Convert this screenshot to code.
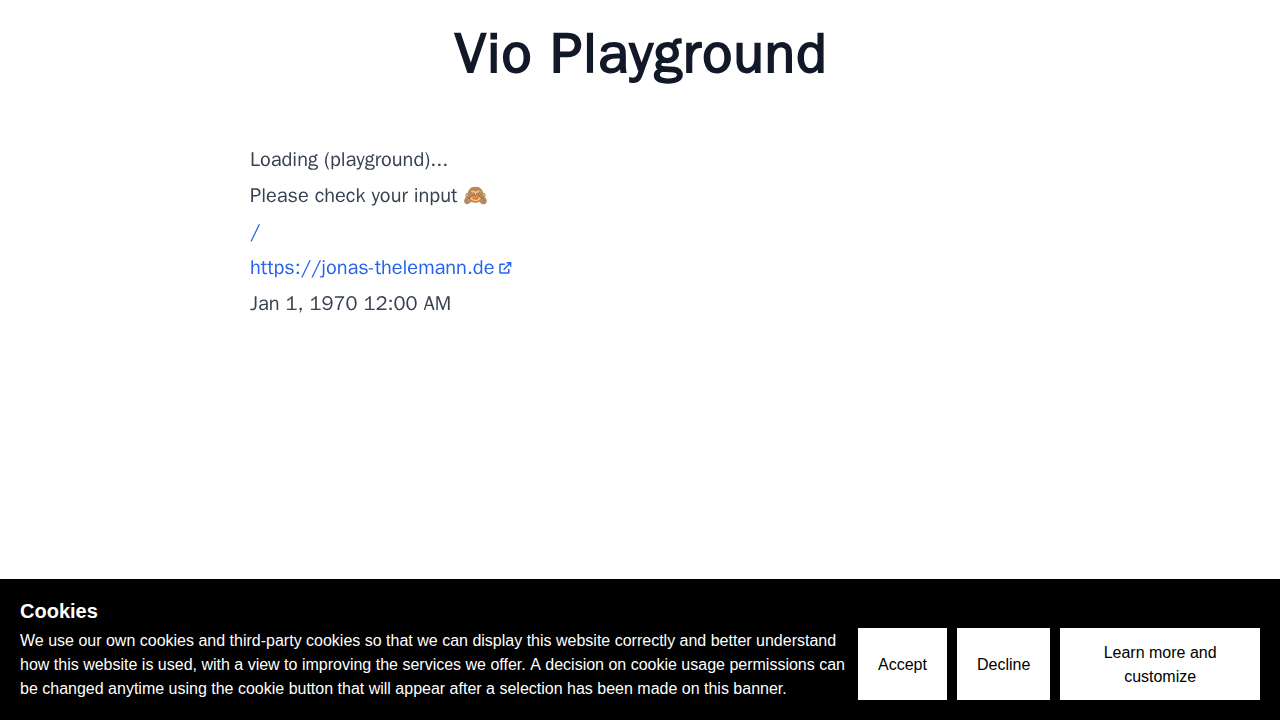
<div class="page">
  <h1>Vio Playground</h1>
  <main>
    <div>Loading (playground)...</div>
    <div>Please check your input 🙈</div>
    <div><a href="#top">/</a></div>
    <div class="row"><a href="#site">https://jonas-thelemann.de</a><svg viewBox="0 0 16 16" fill="none" stroke="currentColor" stroke-width="1.5"><path d="M6.8 4.2H2.6a.6.6 0 0 0-.6.6v7.6a.6.6 0 0 0 .6.6h7.6a.6.6 0 0 0 .6-.6V9M8.5 2.7H12.6v4.1M12.6 2.7 5.6 9.7" /></svg></div>
    <div>Jan 1, 1970 12:00 AM</div>
  </main>
  <section class="banner">
    <div class="copy">
      <h2>Cookies</h2>
      <p>We use our own cookies and third-party cookies so that we can display this website correctly and better understand how this website is used, with a view to improving the services we offer. <span class="plain">A</span> decision on cookie usage permissions can be changed anytime using the cookie button that will appear after a selection has been made on this banner.</p>
    </div>
    <div class="buttons">
      <button>Accept</button>
      <button>Decline</button>
      <button class="more">Learn more and customize</button>
    </div>
  </section>
</div>

<style>
  :global(body) { margin: 0; background: #fff; }
  .page { height: 720px; display: flex; flex-direction: column; overflow: hidden; }
  h1 { margin: 24px 0 0; padding-left: 2px; text-align: center; font: 800 56px/60px "WenQuanYi Zen Hei", "Liberation Sans", sans-serif; letter-spacing: 1.17px; color: #111827; }
  main { width: 780px; margin: 58px auto 0; font: 20px/36px "WenQuanYi Zen Hei", "Liberation Sans", sans-serif; color: #374151; }
  main > div { height: 36px; }
  a { color: #2563eb; text-decoration: none; }
  .row { display: flex; align-items: center; color: #2563eb; }
  .row svg { width: 16px; height: 16px; margin-left: 3.6px; }
  .banner { margin-top: auto; box-sizing: border-box; height: 141px; padding: 20px; display: flex; align-items: flex-end; background: #000; color: #fff; font: 16px/24px "Liberation Sans", sans-serif; }
  .copy { width: 828px; flex: none; margin-right: 10px; }
  h2 { margin: 0 0 6px; font: 700 20px/24px "Liberation Sans", sans-serif; }
  p { margin: 0 0 -1px; }
  .plain { font-kerning: none; }
  .buttons { flex: 1; display: flex; gap: 10px; }
  button { border: 0; border-radius: 0; padding: 13px 20px 11px; background: #fff; color: #000; font: inherit; }
  .more { flex: 1; }
</style>
